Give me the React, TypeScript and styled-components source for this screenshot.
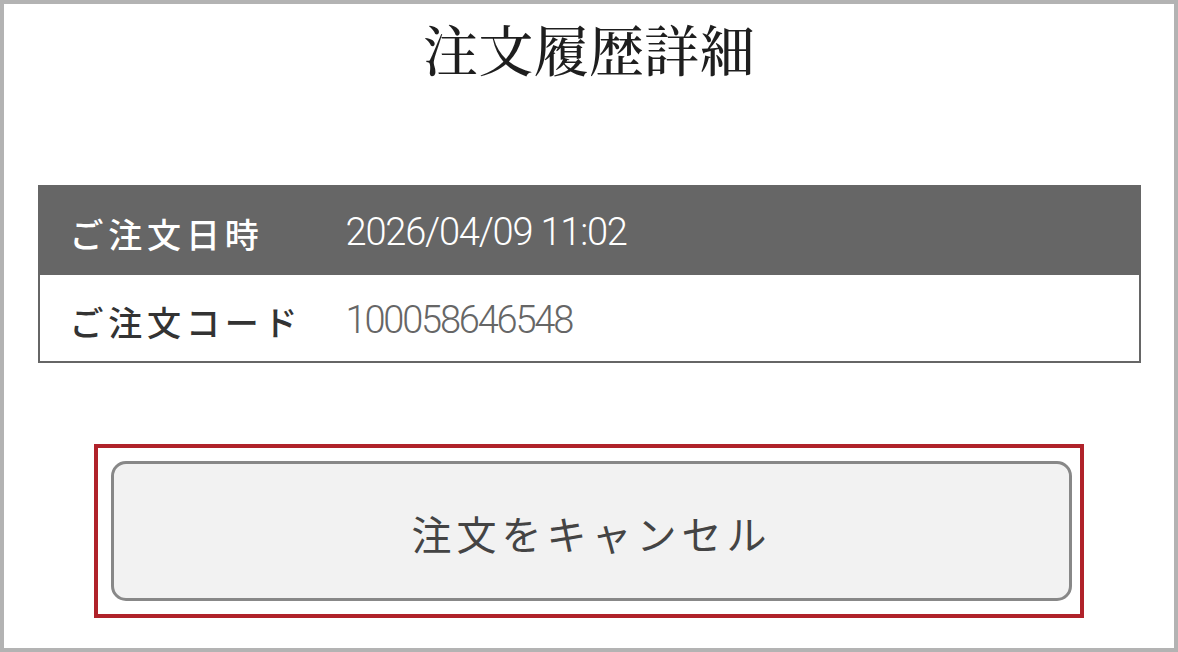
import React from "react";
import styled, { createGlobalStyle } from "styled-components";

const GlobalStyle = createGlobalStyle`
  html, body { margin: 0; padding: 0; background: #ffffff; }
  body { font-family: "Noto Sans CJK JP", "Noto Sans", sans-serif; }
  * { box-sizing: border-box; }
`;

const Frame = styled.div`
  width: 1178px;
  height: 652px;
  border: 4px solid #b3b3b3;
  background: #ffffff;
  display: flex;
  flex-direction: column;
  align-items: center;
  overflow: hidden;
`;

const Title = styled.h1`
  margin: 16px 0 0;
  font-family: "Noto Serif CJK JP", "Noto Sans CJK JP", serif;
  font-size: 55px;
  line-height: 55px;
  font-weight: 500;
  color: #1e1e1e;
  letter-spacing: 0.3px;
`;

const Table = styled.div`
  margin-top: 110px;
  width: 1103px;
  border: 2px solid #666666;
  display: flex;
  flex-direction: column;
`;

const Row = styled.div<{ $head?: boolean }>`
  display: flex;
  align-items: center;
  margin: ${(p) => (p.$head ? "-2px -2px 0" : "0")};
  padding-left: ${(p) => (p.$head ? "32px" : "30px")};
  background: ${(p) => (p.$head ? "#666666" : "#ffffff")};
  height: ${(p) => (p.$head ? "90px" : "86px")};
`;

const Label = styled.div<{ $head?: boolean }>`
  width: 276px;
  font-size: 34px;
  font-weight: 500;
  letter-spacing: 4.8px;
  color: ${(p) => (p.$head ? "#ffffff" : "#333333")};
  padding-top: 6px;
`;

const Value = styled.div<{ $head?: boolean }>`
  font-family: Roboto, "Noto Sans", sans-serif;
  font-size: 38px;
  font-weight: 300;
  letter-spacing: ${(p) => (p.$head ? "-1.2px" : "-2.2px")};
  color: ${(p) => (p.$head ? "#ffffff" : "#666666")};
  padding-top: 4px;
`;

const CancelArea = styled.div`
  margin-top: 81px;
  width: 990px;
  border: 4px solid #b0222a;
  padding: 13px 8px 13px 13px;
  display: flex;
`;

const CancelButton = styled.button`
  flex: 1;
  height: 140px;
  border: 3px solid #888888;
  border-radius: 15px;
  background: #f2f2f2;
  font-family: "Noto Sans CJK JP", sans-serif;
  font-size: 40px;
  font-weight: 400;
  letter-spacing: 5px;
  color: #444444;
  display: flex;
  align-items: center;
  justify-content: center;
  padding: 4px 0 0;
  cursor: pointer;
`;

export default function App() {
  return (
    <>
      <GlobalStyle />
      <Frame>
        <Title>注文履歴詳細</Title>
        <Table>
          <Row $head>
            <Label $head>ご注文日時</Label>
            <Value $head>2026/04/09 11:02</Value>
          </Row>
          <Row>
            <Label>ご注文コード</Label>
            <Value>100058646548</Value>
          </Row>
        </Table>
        <CancelArea>
          <CancelButton>注文をキャンセル</CancelButton>
        </CancelArea>
      </Frame>
    </>
  );
}
